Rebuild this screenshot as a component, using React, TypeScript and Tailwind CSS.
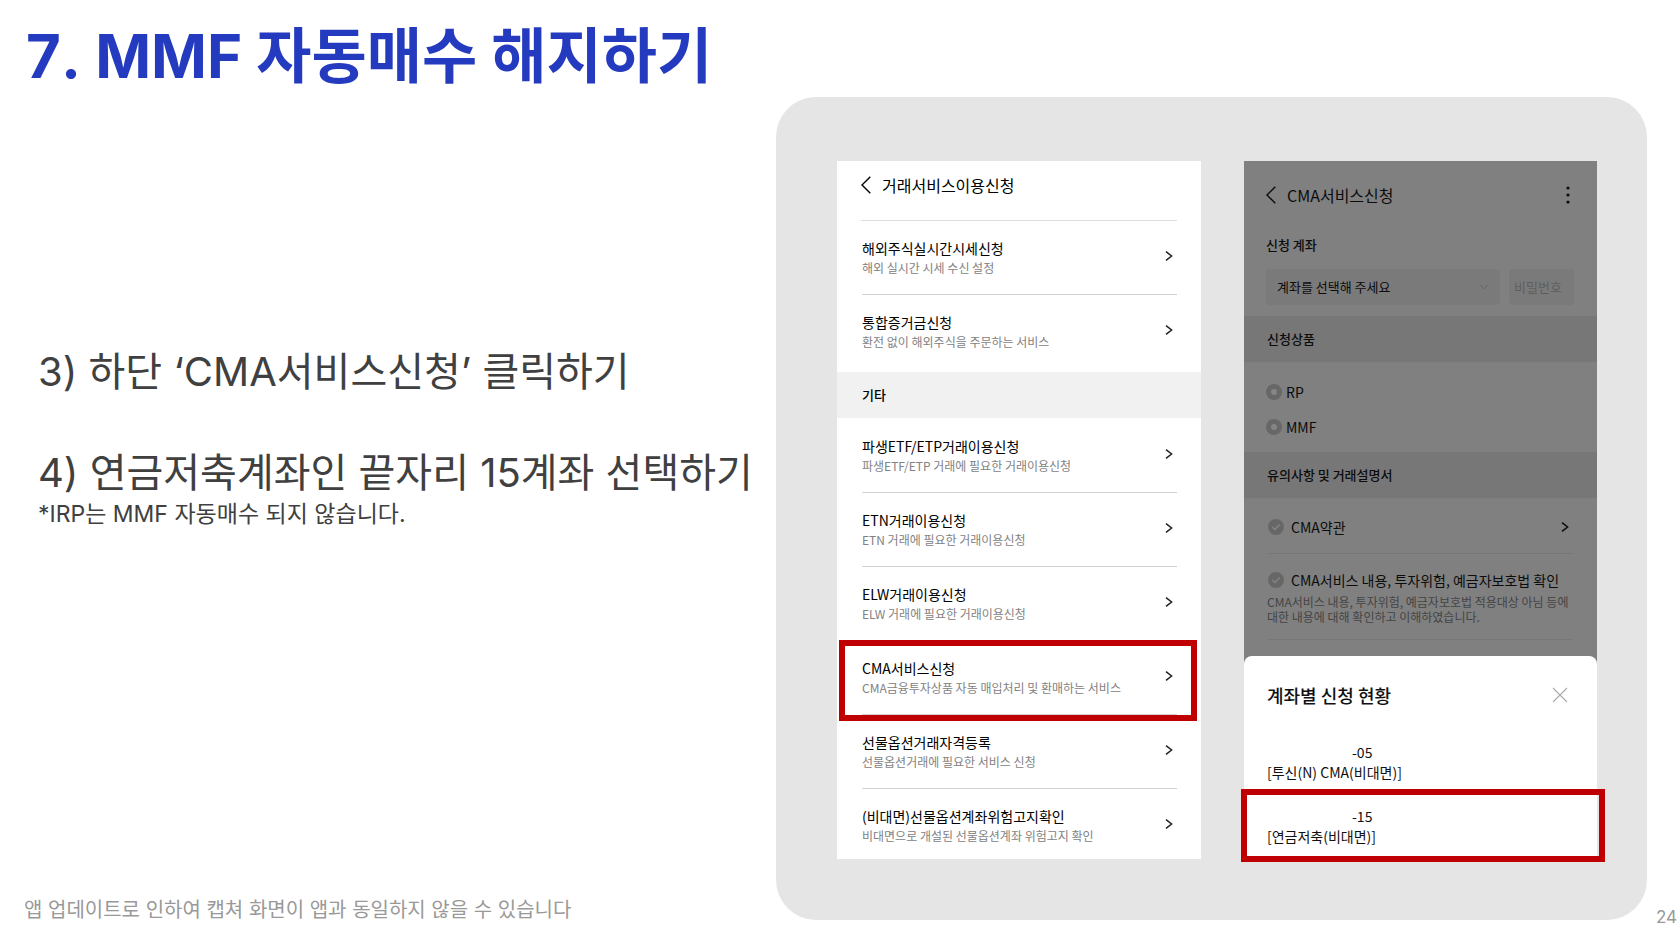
import { useState } from "react";

const services = [
  { name: "해외주식실시간시세신청", desc: "해외 실시간 시세 수신 설정" },
  { name: "통합증거금신청", desc: "환전 없이 해외주식을 주문하는 서비스" },
];

const etcServices = [
  { name: "파생ETF/ETP거래이용신청", desc: "파생ETF/ETP 거래에 필요한 거래이용신청" },
  { name: "ETN거래이용신청", desc: "ETN 거래에 필요한 거래이용신청" },
  { name: "ELW거래이용신청", desc: "ELW 거래에 필요한 거래이용신청" },
  {
    name: "CMA서비스신청",
    desc: "CMA금융투자상품 자동 매입처리 및 환매하는 서비스",
    highlighted: true,
  },
  { name: "선물옵션거래자격등록", desc: "선물옵션거래에 필요한 서비스 신청" },
  {
    name: "(비대면)선물옵션계좌위험고지확인",
    desc: "비대면으로 개설된 선물옵션계좌 위험고지 확인",
  },
];

const BackIcon = () => (
  <svg viewBox="0 0 10 18" className="h-[18px] w-[10px]" fill="none" stroke="currentColor" strokeWidth="1.4">
    <path d="M9.3 0.8 1 9l8.3 8.2" />
  </svg>
);

const ChevronIcon = () => (
  <svg viewBox="0 0 8 12" className="h-3 w-2 shrink-0" fill="none" stroke="currentColor" strokeWidth="1.5">
    <path d="M1 1.6 6.6 6 1 10.4" />
  </svg>
);

type Service = { name: string; desc: string; highlighted?: boolean };

const ServiceRow = ({ name, desc, highlighted }: Service) => (
  <li className="relative mr-6 ml-[25px] h-[74px] border-b border-[#d2d2d2] last:border-b-0">
    <button className="flex w-full items-start justify-between pt-[17px] pr-1 text-left">
      <span>
        <span className="block text-sm leading-5 text-black">{name}</span>
        <span className="block text-xs leading-5 text-[#828282]">{desc}</span>
      </span>
      <span className="pt-3 text-[#222]">
        <ChevronIcon />
      </span>
    </button>
    {highlighted && (
      <div className="pointer-events-none absolute -top-px -right-5 -bottom-[7px] -left-[23px] border-[6px] border-[#c00000]" />
    )}
  </li>
);

const ServiceListScreen = () => (
  <section className="h-[698px] w-[364px] shrink-0 overflow-hidden bg-white">
    <header className="mr-6 ml-6 flex h-[60px] items-start gap-[11px] border-b border-[#dedede] pt-3">
      <button aria-label="뒤로" className="mt-[3px]">
        <BackIcon />
      </button>
      <h2 className="text-base leading-6 text-black">거래서비스이용신청</h2>
    </header>
    <ul className="pb-[3px]">
      {services.map((service) => (
        <ServiceRow key={service.name} {...service} />
      ))}
    </ul>
    <h3 className="bg-[#f1f1f1] px-[25px] text-[13px] leading-[46px] font-medium text-black">기타</h3>
    <ul className="pt-px">
      {etcServices.map((service) => (
        <ServiceRow key={service.name} {...service} />
      ))}
    </ul>
  </section>
);

const CheckItem = ({ id, label }: { id: string; label: string }) => (
  <div className="flex items-center gap-[7px]">
    <span className="relative flex size-4">
      <input id={id} type="checkbox" className="size-4 appearance-none rounded-full bg-[#676767]" />
      <svg viewBox="0 0 16 16" className="pointer-events-none absolute inset-0" fill="none" stroke="#858585" strokeWidth="1.4">
        <path d="m4.3 8 2.6 2.6 4.8-5" />
      </svg>
    </span>
    <label htmlFor={id} className="text-sm leading-5">
      {label}
    </label>
  </div>
);

const CmaScreen = () => {
  const [product, setProduct] = useState("");

  return (
    <section className="h-[698px] w-[353px] shrink-0 bg-[#808080] text-[#0c0c0c]">
      <header className="flex items-center justify-between pt-[22px] pr-[27px] pl-[22px]">
        <div className="flex items-center gap-[11px]">
          <button aria-label="뒤로">
            <BackIcon />
          </button>
          <h2 className="text-base leading-6">CMA서비스신청</h2>
        </div>
        <button aria-label="더보기">
          <svg viewBox="0 0 4 18" className="h-[18px] w-1" fill="currentColor">
            <circle cx="2" cy="2" r="1.6" />
            <circle cx="2" cy="9" r="1.6" />
            <circle cx="2" cy="16" r="1.6" />
          </svg>
        </button>
      </header>

      <div className="px-[22px] pt-7 pb-[11px]">
        <label htmlFor="account" className="block text-[13px] leading-5 font-medium">
          신청 계좌
        </label>
        <div className="mt-[14px] flex h-9 gap-[9px]">
          <div className="relative w-[234px]">
            <select
              id="account"
              className="h-full w-full appearance-none rounded-sm bg-[#7a7a7a] pl-[11px] text-[13px]"
            >
              <option>계좌를 선택해 주세요</option>
            </select>
            <svg
              viewBox="0 0 10 6"
              className="pointer-events-none absolute top-[15px] right-[11px] h-[6px] w-[10px]"
              fill="none"
              stroke="#646464"
            >
              <path d="m1 .8 4 4 4-4" />
            </svg>
          </div>
          <input
            type="password"
            aria-label="비밀번호"
            placeholder="비밀번호"
            className="w-[65px] rounded-sm bg-[#7a7a7a] px-[5px] text-[13px] placeholder:text-[#5e5e5e]"
          />
        </div>
      </div>

      <h3 className="bg-[#777] px-[23px] text-[13px] leading-[46px] font-medium">신청상품</h3>
      <div className="flex flex-col gap-[15px] px-[22px] pt-5 pb-[15px]">
        {["RP", "MMF"].map((name) => (
          <label key={name} className="flex items-center gap-1 text-sm leading-5">
            <input
              type="radio"
              name="product"
              value={name}
              checked={product === name}
              onChange={() => setProduct(name)}
              className="size-4 appearance-none rounded-full border-[5px] border-[#676767] bg-[#858585]"
            />
            {name}
          </label>
        ))}
      </div>

      <h3 className="bg-[#777] px-[23px] text-[13px] leading-[46px] font-medium">유의사항 및 거래설명서</h3>
      <div className="mx-6">
        <div className="flex h-14 items-center justify-between border-b border-[#777] pt-0.5 pr-1">
          <CheckItem id="terms" label="CMA약관" />
          <button aria-label="약관 보기">
            <ChevronIcon />
          </button>
        </div>
        <div className="border-b border-[#777] pt-4 pb-[15px]">
          <CheckItem id="confirm" label="CMA서비스 내용, 투자위험, 예금자보호법 확인" />
          <p className="mt-1 -mr-1 -ml-px text-xs leading-[15px] text-[#444]">
            CMA서비스 내용, 투자위험, 예금자보호법 적용대상 아님 등에
            <br />
            대한 내용에 대해 확인하고 이해하였습니다.
          </p>
        </div>
      </div>

      {/* Bottom sheet */}
      <div className="mt-4 h-[203px] rounded-t-lg bg-white text-[#111]">
        <div className="flex items-center justify-between pt-[27px] pr-[29px] pl-[23px]">
          <h2 className="text-lg leading-6 font-medium">계좌별 신청 현황</h2>
          <button aria-label="닫기">
            <svg viewBox="0 0 16 16" className="size-4" fill="none" stroke="#aaa" strokeWidth="1.1">
              <path d="m1 1 14 14M15 1 1 15" />
            </svg>
          </button>
        </div>
        <button className="mt-[35px] block px-[23px] text-left text-sm leading-5">
          <span className="block pl-[85px]">-05</span>
          <span className="block">[투신(N) CMA(비대면)]</span>
        </button>
        <button className="mt-[7px] -ml-[3px] block h-[73px] w-[364px] border-[6px] border-[#c00000] pl-5 text-left text-sm leading-5">
          <span className="block pl-[85px]">-15</span>
          <span className="block">[연금저축(비대면)]</span>
        </button>
      </div>
    </section>
  );
};

const App = () => {
  return (
    <main className="flex min-h-screen bg-white font-['Inter','Noto_Sans_CJK_KR',sans-serif]">
      <div className="flex min-w-0 flex-1 flex-col justify-between whitespace-nowrap text-[#404040]">
        <h1 className="pt-[18px] pl-[26px] text-[60px] leading-[76px] font-bold text-[#243bbf] [font-kerning:none]">
          7. MMF 자동매수 해지하기
        </h1>
        <div className="pb-[114px] pl-[38px]">
          <p className="text-[40px] leading-[50px]">3) 하단 ‘CMA서비스신청’ 클릭하기</p>
          <p className="mt-[51px] text-[40px] leading-[50px]">4) 연금저축계좌인 끝자리 15계좌 선택하기</p>
          <p className="text-[23px] leading-8">*IRP는 MMF 자동매수 되지 않습니다.</p>
        </div>
        <p className="pb-[13px] pl-6 text-xl leading-7 text-[#999]">
          앱 업데이트로 인하여 캡쳐 화면이 앱과 동일하지 않을 수 있습니다
        </p>
      </div>

      <div className="mt-[97px] mb-[17px] flex w-[871px] shrink-0 gap-[43px] rounded-[40px] bg-[#e5e5e5] pt-16 pl-[61px] font-['Noto_Sans_CJK_KR',sans-serif]">
        <ServiceListScreen />
        <CmaScreen />
      </div>

      <p className="w-[33px] self-end pb-2 pl-[9px] text-[17px] leading-6 text-[#999]">24</p>
    </main>
  );
};

export default App;
